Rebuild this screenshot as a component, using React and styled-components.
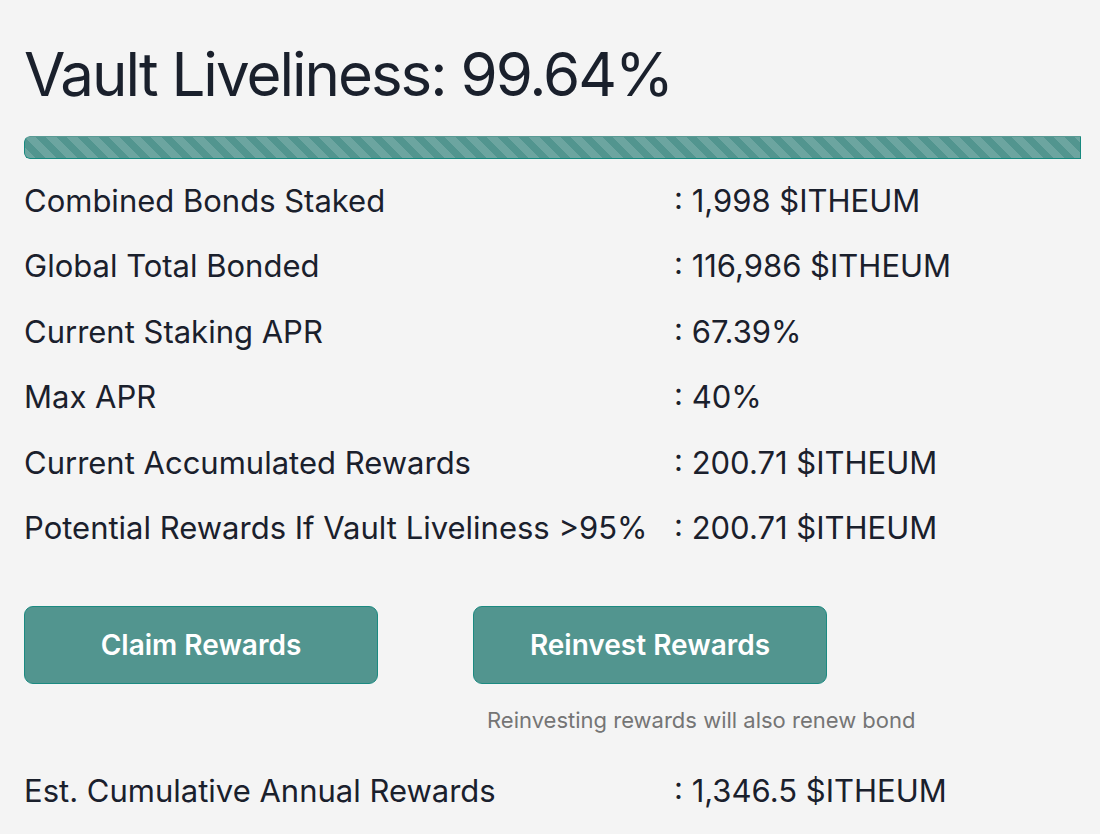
import React from "react";
import styled, { createGlobalStyle } from "styled-components";

const Global = createGlobalStyle`
  html, body { margin: 0; padding: 0; background: #f4f4f4; }
  body { font-family: Inter, "Noto Sans", sans-serif; color: #1a202c; }
`;

const Page = styled.div`
  width: 1100px;
  height: 834px;
  overflow: hidden;
  box-sizing: border-box;
  padding: 34px 15px 0 24px;
  display: flex;
  flex-direction: column;
`;

const Title = styled.h1`
  margin: 0;
  font-size: 60px;
  line-height: 80px;
  font-weight: 400;
  letter-spacing: -2px;
  color: #1a202c;
`;

const Track = styled.div`
  margin-top: 22px;
  height: 23px;
  border-radius: 6px 0 0 6px;
  overflow: hidden;
  background: transparent;
`;

const Fill = styled.div`
  height: 100%;
  box-sizing: border-box;
  border-radius: 6px 0 0 6px;
  background-color: #52958f;
  background-image: linear-gradient(
    45deg,
    rgba(255, 255, 255, 0.15) 25%,
    transparent 25%,
    transparent 50%,
    rgba(255, 255, 255, 0.15) 50%,
    rgba(255, 255, 255, 0.15) 75%,
    transparent 75%,
    transparent
  );
  background-size: 21px 21px;
  border: 1px solid #17897f;
  border-top-color: #5a9b95;
`;

const Stats = styled.div`
  display: grid;
  grid-template-columns: 650px 1fr;
  row-gap: 29.4px;
  margin-top: ${(p) => p.$top}px;
  font-size: 31px;
  line-height: 36px;
`;

const Label = styled.div`
  white-space: nowrap;
`;

const Value = styled.div`
  white-space: nowrap;
`;

const Actions = styled.div`
  display: flex;
  gap: 95px;
  margin-top: 60px;
`;

const ActionCol = styled.div`
  display: flex;
  flex-direction: column;
  align-items: flex-start;
`;

const Button = styled.button`
  width: 354px;
  height: 78px;
  border-radius: 9px;
  border: 1px solid #1b8a81;
  background: #52958f;
  color: #ffffff;
  font-family: Inter, "Noto Sans", sans-serif;
  font-size: 28px;
  font-weight: 600;
  cursor: pointer;
`;

const Hint = styled.div`
  margin: 23px 0 0 14px;
  font-size: 22px;
  line-height: 26px;
  color: #757575;
  white-space: nowrap;
`;

const stats = [
  ["Combined Bonds Staked", "1,998 $ITHEUM"],
  ["Global Total Bonded", "116,986 $ITHEUM"],
  ["Current Staking APR", "67.39%"],
  ["Max APR", "40%"],
  ["Current Accumulated Rewards", "200.71 $ITHEUM"],
  ["Potential Rewards If Vault Liveliness >95%", "200.71 $ITHEUM"],
];

export default function App() {
  const liveliness = 99.64;
  return (
    <>
      <Global />
      <Page>
        <Title>Vault Liveliness: {liveliness}%</Title>
        <Track>
          <Fill style={{ width: `${liveliness}%` }} />
        </Track>
        <Stats $top={24}>
          {stats.map(([l, v]) => (
            <React.Fragment key={l}>
              <Label>{l}</Label>
              <Value>: {v}</Value>
            </React.Fragment>
          ))}
        </Stats>
        <Actions>
          <ActionCol>
            <Button>Claim Rewards</Button>
          </ActionCol>
          <ActionCol>
            <Button>Reinvest Rewards</Button>
            <Hint>Reinvesting rewards will also renew bond</Hint>
          </ActionCol>
        </Actions>
        <Stats $top={40}>
          <Label>Est. Cumulative Annual Rewards</Label>
          <Value>: 1,346.5 $ITHEUM</Value>
        </Stats>
      </Page>
    </>
  );
}
